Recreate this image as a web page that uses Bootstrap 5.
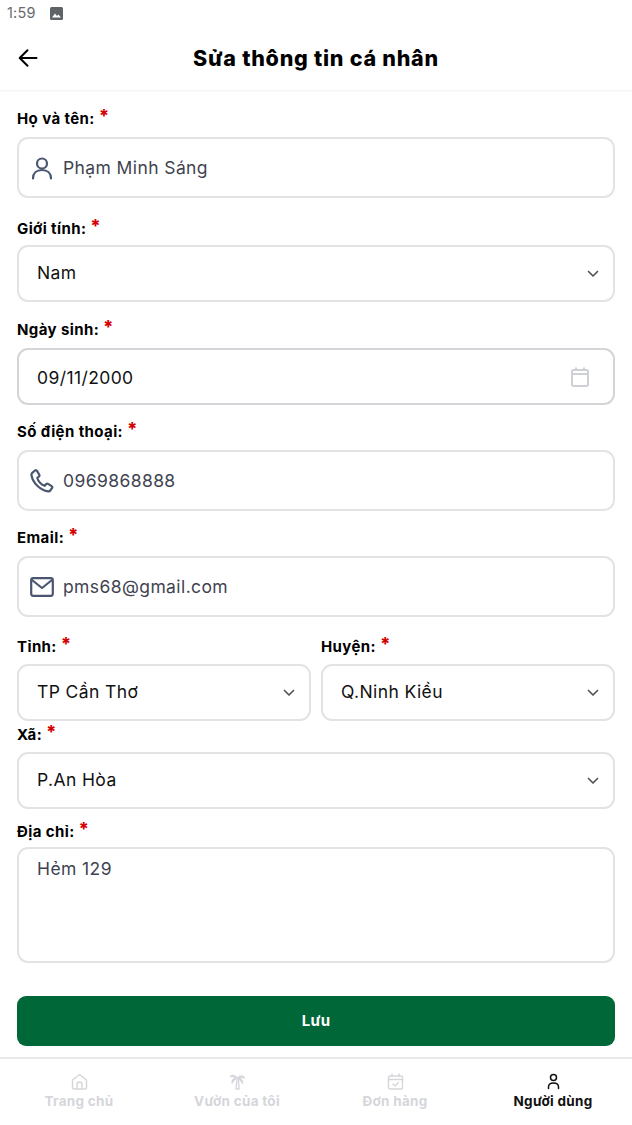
<!doctype html>
<html lang="vi">
<head>
<meta charset="utf-8">
<title>Sửa thông tin cá nhân</title>
<link href="https://cdn.jsdelivr.net/npm/bootstrap@5.3.0/dist/css/bootstrap.min.css" rel="stylesheet">
<style>
body{font-family:"Inter","Open Sans",sans-serif;color:#000;background:#fff;width:632px;height:1125px;overflow:hidden}
.status-row{height:26px;padding-left:7px;font-size:14.5px;color:#6b6b6b;letter-spacing:.2px;gap:14px}
.head-row{height:65px;border-bottom:1px solid #f6f6f6;position:relative;box-shadow:0 1px 1px #fbfbfb}
.head-row h1{font-size:21.5px;font-weight:800;margin:0;padding-top:1px;letter-spacing:.75px}
.back-btn{position:absolute;left:18px;top:22px;line-height:0}
.form-pane{padding:0 17px}
.lbl{display:block;height:24px;line-height:24px;font-size:15px;font-weight:700;letter-spacing:.4px;margin:0}
.lbl b{color:#d40000;font-weight:800;font-size:18px;position:relative;top:-2px}
.f-box.form-control,.f-select.form-select{border:2px solid #e3e3e6;border-radius:11px;font-size:17.5px;letter-spacing:.4px;color:#111;background-color:#fff;box-shadow:none}
.f-box{display:flex;align-items:center;padding:0}
.tall{height:61px}
.med{height:57px}
.f-box input{border:0;outline:0;flex:1;min-width:0;background:transparent;color:#3f4350;font:inherit;letter-spacing:inherit;padding:2px 0 0}
.f-box .ic{width:44px;flex:none;display:flex;justify-content:center;padding-left:1px;line-height:0;color:#4a5670}
.f-select.form-select{height:57px;padding:0 40px 0 18px;background-image:url("data:image/svg+xml,%3csvg xmlns='http://www.w3.org/2000/svg' viewBox='0 0 12 8'%3e%3cpath fill='none' stroke='%23555' stroke-width='1.7' stroke-linecap='round' stroke-linejoin='round' d='M1.5 1.5 6 6l4.5-4.5'/%3e%3c/svg%3e");background-size:12px 8px;background-position:right 14px center}
.date-box.form-control{border-color:#d5d5d9}
.date-box input{color:#111;padding:3px 0 0 18px}
.date-box .cal{margin-right:24px;line-height:0}
.note.form-control{height:116px;padding:7px 18px;resize:none;border:2px solid #e3e3e6;border-radius:11px;font-size:17.5px;letter-spacing:.4px;color:#3f4350;box-shadow:none}
.gap-a{margin-top:15px}.gap-b{margin-top:18px}.gap-b2{margin-top:17px}.gap-c{margin-top:14px}.gap-d{margin-top:1px}.gap-e{margin-top:10px}
.below4{margin-bottom:4px}.below5{margin-bottom:5px}.below6{margin-bottom:6px}.below7{margin-bottom:7px}
.save-btn.btn{display:block;width:100%;height:50px;margin-top:33px;background:#006838;border:0;border-radius:9px;color:#fff;font-size:15px;font-weight:700;letter-spacing:.3px}
.two-col{display:grid;grid-template-columns:294px 294px;column-gap:10px}
.tabbar{position:absolute;left:0;right:0;top:1057px;height:68px;border-top:2px solid #e9e9ec;background:#fff}
.tab-item{flex:1 1 0;padding-top:14px;text-align:center;font-size:13.5px;font-weight:700;color:#d5d6db;letter-spacing:.3px;line-height:18px}
.tab-item svg{display:block;margin:0 auto 2px}
.tab-item.on{color:#111}
</style>
</head>
<body>
<div class="status-row d-flex align-items-center">
  <span>1:59</span>
  <svg width="13" height="13" viewBox="0 0 13 13" aria-hidden="true"><rect width="13" height="13" rx="1.5" fill="#5f6368"/><path d="M2 10.5 5 6.5l2 2.4 1.4-1.5 2.6 3.1z" fill="#fff"/></svg>
</div>
<header class="head-row d-flex align-items-center justify-content-center">
  <a class="back-btn" href="#" aria-label="Quay lại"><svg width="20" height="20" viewBox="0 0 20 20" fill="none" stroke="#000" stroke-width="2" stroke-linecap="round" stroke-linejoin="round"><path d="M18.500 10H2M9.500 2.200 1.700 10l7.800 7.800"/></svg></a>
  <h1>Sửa thông tin cá nhân</h1>
</header>
<form class="form-pane">
  <label class="lbl gap-a below7">Họ và tên: <b>*</b></label>
  <div class="f-box form-control tall">
    <span class="ic"><svg width="24" height="24" viewBox="0 0 24 24" fill="none" stroke="currentColor" stroke-width="2.200" stroke-linecap="round"><circle cx="12" cy="7.500" r="5"/><path d="M3 22.500c0-5 3.500-8.500 9-8.500s9 3.500 9 8.500"/></svg></span>
    <input type="text" value="Phạm Minh Sáng">
  </div>

  <label class="lbl gap-b below5">Giới tính: <b>*</b></label>
  <select class="f-select form-select"><option>Nam</option></select>

  <label class="lbl gap-a below7">Ngày sinh: <b>*</b></label>
  <div class="f-box form-control med date-box">
    <input type="text" value="09/11/2000">
    <span class="cal"><svg width="18" height="20" viewBox="0 0 18 20" fill="none" stroke="#cfd0d5" stroke-width="2"><rect x="1" y="3" width="16" height="16" rx="1.500"/><path d="M1 7h16M5 .5v3M13 .5v3"/></svg></span>
  </div>

  <label class="lbl gap-c below7">Số điện thoại: <b>*</b></label>
  <div class="f-box form-control tall">
    <span class="ic"><svg width="24" height="24" viewBox="0 0 24 24" fill="none" stroke="currentColor" stroke-width="2.200" stroke-linecap="round" stroke-linejoin="round"><path d="M2.500 3.600 5 1.500c.7-.5 1.500-.3 2 .4l2.300 3.800c.3.600.2 1.300-.3 1.700L7.300 9c.9 3.200 3.900 6.500 7.500 7.800l1.500-1.700c.5-.5 1.200-.6 1.800-.2l3.500 2.200c.7.500.9 1.300.4 2l-1.700 2.400c-.5.700-1.300 1-2.100.9C10 21 2.900 14 1.500 6.200c-.2-1 .2-1.900 1-2.600z"/></svg></span>
    <input type="text" value="0969868888">
  </div>

  <label class="lbl gap-c below7">Email: <b>*</b></label>
  <div class="f-box form-control tall">
    <span class="ic"><svg width="24" height="20" viewBox="0 0 24 20" fill="none" stroke="currentColor" stroke-width="2.200" stroke-linecap="round" stroke-linejoin="round"><rect x="1.200" y="1.200" width="21.600" height="17.600" rx="2"/><path d="m2 3 10 8 10-8"/></svg></span>
    <input type="email" value="pms68@gmail.com">
  </div>

  <div class="two-col gap-b2">
    <div>
      <label class="lbl below6">Tỉnh: <b>*</b></label>
      <select class="f-select form-select"><option>TP Cần Thơ</option></select>
    </div>
    <div>
      <label class="lbl below6">Huyện: <b>*</b></label>
      <select class="f-select form-select"><option>Q.Ninh Kiều</option></select>
    </div>
  </div>

  <label class="lbl gap-d below6">Xã: <b>*</b></label>
  <select class="f-select form-select"><option>P.An Hòa</option></select>

  <label class="lbl gap-e below4">Địa chỉ: <b>*</b></label>
  <textarea class="note form-control">Hẻm 129</textarea>

  <button type="button" class="save-btn btn">Lưu</button>
</form>
<nav class="tabbar d-flex">
  <div class="tab-item">
    <svg width="17" height="17" viewBox="0 0 17 17" fill="none" stroke="#d5d6db" stroke-width="1.400" stroke-linejoin="round"><path d="M1.500 7 8.500 1.500l7 5.500v7.500a1.500 1.500 0 0 1-1.500 1.500H3a1.500 1.500 0 0 1-1.500-1.500z"/><path d="M6 15.800v-4.300a2.500 2.500 0 0 1 5 0v4.300"/></svg>
    Trang chủ
  </div>
  <div class="tab-item">
    <svg width="17" height="17" viewBox="0 0 17 17" fill="none" stroke="#d5d6db" stroke-width="1.300" stroke-linecap="round" stroke-linejoin="round"><path d="M8 5C6 2 3 1.500 1.500 3.500 4 3 6 4 8 5zM8.500 5C10.500 2.500 14 2 15.500 5c-2.500-.8-5-.8-7 0zM8 5C5 5 2.500 7 3 10c1.500-2.500 3-4 5-5zM9 5c2.500 0 5 2 4.500 5C12 8 10.500 6 9 5z"/><path d="M8 6.500 7 16h3L9.500 6.500"/></svg>
    Vườn của tôi
  </div>
  <div class="tab-item">
    <svg width="17" height="17" viewBox="0 0 17 17" fill="none" stroke="#d5d6db" stroke-width="1.400" stroke-linecap="round" stroke-linejoin="round"><rect x="1.500" y="3" width="14" height="13" rx="1.500"/><path d="M1.500 6.500h14M5 1v2.500M12 1v2.500M6 11l2 2 3.500-3.500"/></svg>
    Đơn hàng
  </div>
  <div class="tab-item on">
    <svg width="17" height="17" viewBox="0 0 17 17" fill="none" stroke="#111" stroke-width="1.500" stroke-linecap="round"><circle cx="8.500" cy="4.500" r="3"/><path d="M3.500 15.500v-1.500c0-2.500 2-4 5-4s5 1.500 5 4v1.500"/></svg>
    Người dùng
  </div>
</nav>
<script src="https://cdn.jsdelivr.net/npm/bootstrap@5.3.0/dist/js/bootstrap.bundle.min.js"></script>
</body>
</html>
